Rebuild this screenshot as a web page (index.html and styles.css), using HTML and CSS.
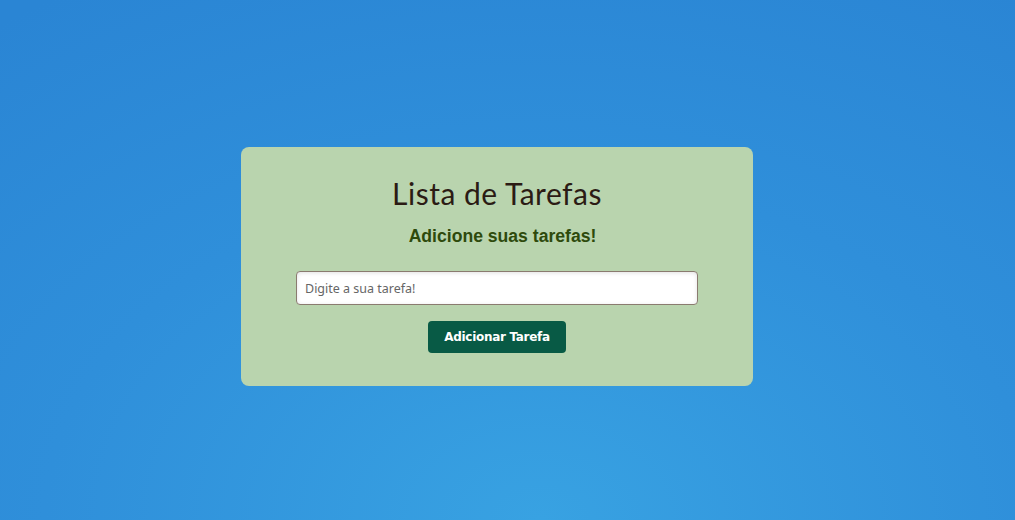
FILE: index.html
```html
<!DOCTYPE html>
<html lang="pt-BR">
<head>
<meta charset="utf-8">
<title>Lista de Tarefas</title>
<link rel="stylesheet" href="styles.css">
</head>
<body>
  <main class="card">
    <h1 class="title">Lista de Tarefas</h1>
    <h2 class="subtitle">Adicione suas tarefas!</h2>
    <form class="form">
      <input class="task-input" type="text" placeholder="Digite a sua tarefa!">
      <button class="add-btn" type="button">Adicionar Tarefa</button>
    </form>
  </main>
</body>
</html>
```
FILE: styles.css
```css
html, body {
  margin: 0;
  height: 100%;
}
body {
  box-sizing: border-box;
  display: flex;
  align-items: center;
  justify-content: center;
  padding: 13px 21px 0 0;
  background: radial-gradient(ellipse 900px 620px at 540px 520px, #38a2e2 0%, #2f8fda 55%, #2a85d4 100%);
  font-family: "Liberation Sans", Arial, sans-serif;
}
.card {
  width: 512px;
  height: 239px;
  box-sizing: border-box;
  background: #b9d4ae;
  border-radius: 8px;
  padding: 28px 55px 0;
  display: flex;
  flex-direction: column;
  align-items: center;
}
.title {
  margin: 0;
  font-family: "Lato", "DejaVu Sans", sans-serif;
  font-weight: 400;
  font-size: 30px;
  line-height: 36px;
  color: #2b1b14;
  letter-spacing: 0.5px;
}
.subtitle {
  margin: 14px 0 0 11px;
  font-size: 17.6px;
  line-height: 22px;
  font-weight: 700;
  color: #2e4a0c;
}
.form {
  margin-top: 24px;
  width: 100%;
  display: flex;
  flex-direction: column;
  align-items: center;
}
.task-input {
  width: 100%;
  height: 34px;
  box-sizing: border-box;
  border: 1px solid #8a7b6f;
  border-radius: 4px;
  padding: 0 8px;
  font-family: "Noto Sans", "Open Sans", sans-serif;
  font-size: 12.5px;
  color: #333;
  background: #fff;
  box-shadow: inset 0 1px 4px rgba(0,0,0,0.12);
  outline: none;
}
.task-input::placeholder {
  color: #666;
}
.add-btn {
  margin-top: 16px;
  width: 138px;
  height: 32px;
  border: none;
  border-radius: 4px;
  background: #085a45;
  color: #fff;
  font-family: "DejaVu Sans", Verdana, sans-serif;
  font-weight: 700;
  font-size: 12px;
  letter-spacing: -0.3px;
  cursor: pointer;
}
```
